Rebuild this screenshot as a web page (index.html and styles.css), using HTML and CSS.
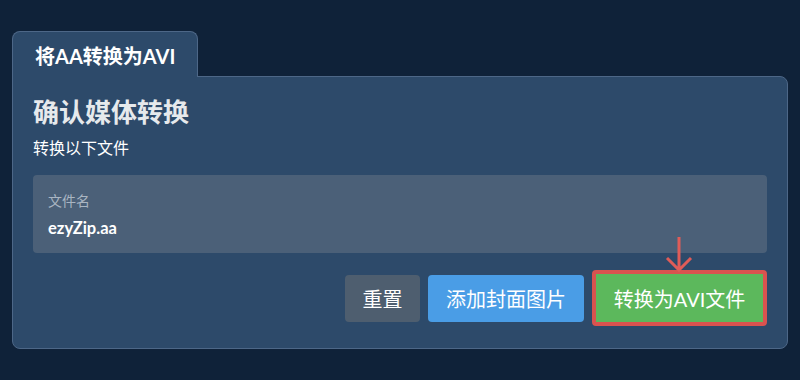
FILE: index.html
```html
<!DOCTYPE html>
<html lang="zh">
<head>
<meta charset="utf-8">
<link rel="stylesheet" href="styles.css">
</head>
<body>
<div class="wrap">
  <div class="tab">将AA转换为AVI</div>
  <div class="panel">
    <h1 class="title">确认媒体转换</h1>
    <p class="sub">转换以下文件</p>
    <div class="filebox">
      <div class="label">文件名</div>
      <div class="fname">ezyZip.aa</div>
    </div>
    <div class="actions">
      <button class="btn btn-reset">重置</button>
      <button class="btn btn-cover">添加封面图片</button>
      <div class="hl">
        <svg class="arrow" width="30" height="36" viewBox="0 0 30 36">
          <path d="M15 1 V34 M3 22 L15 34 L27 22" fill="none" stroke="#e05c58" stroke-width="3"/>
        </svg>
        <button class="btn btn-convert">转换为AVI文件</button>
      </div>
    </div>
  </div>
</div>
</body>
</html>
```
FILE: styles.css
```css
html, body {
  margin: 0;
  padding: 0;
  background: #0f2239;
  font-family: "Lato", "Noto Sans CJK SC", sans-serif;
  color: #e8ecf0;
}
.wrap {
  padding: 31px 12px 0 12px;
}
.tab {
  display: inline-block;
  position: relative;
  z-index: 1;
  box-sizing: border-box;
  width: 186px;
  height: 46px;
  margin-bottom: -1px;
  padding-left: 22px;
  line-height: 48px;
  font-size: 20px;
  font-weight: 700;
  color: #ffffff;
  background: #2d4a6a;
  border: 1px solid #4d6787;
  border-bottom: none;
  border-radius: 8px 8px 0 0;
}
.panel {
  box-sizing: border-box;
  height: 273px;
  background: #2d4a6a;
  border: 1px solid #4d6787;
  border-radius: 0 8px 8px 8px;
  padding: 19px 20px 20px 20px;
}
.title {
  margin: 0;
  font-size: 26px;
  line-height: 32px;
  font-weight: 700;
  color: #e6e9ec;
}
.sub {
  margin: 9px 0 0 0;
  font-size: 16px;
  line-height: 22px;
  color: #ffffff;
}
.filebox {
  margin-top: 16px;
  height: 78px;
  box-sizing: border-box;
  background: #4b6078;
  border-radius: 4px;
  padding: 16px 15px 0 15px;
}
.label {
  font-size: 14px;
  line-height: 20px;
  color: #a9b5c2;
}
.fname {
  margin-top: 7px;
  font-size: 16.5px;
  line-height: 20px;
  font-weight: 700;
  color: #ffffff;
}
.actions {
  margin-top: 17px;
  display: flex;
  justify-content: flex-end;
  align-items: center;
  gap: 8px;
}
.btn {
  border: none;
  font-family: inherit;
  font-size: 20px;
  color: #ffffff;
  height: 47px;
  border-radius: 4px;
  padding: 0;
  cursor: pointer;
}
.btn-reset {
  background: #4e5e6f;
  width: 75px;
}
.btn-cover {
  background: #4a9de6;
  width: 156px;
}
.hl {
  position: relative;
  box-sizing: border-box;
  width: 175px;
  height: 56px;
  border: 4px solid #d9534f;
  border-radius: 4px;
  background: #5cb85c;
  display: flex;
}
.btn-convert {
  background: #5cb85c;
  width: 100%;
  height: 100%;
  border-radius: 0;
}
.arrow {
  position: absolute;
  left: 68px;
  top: -38px;
}
```
